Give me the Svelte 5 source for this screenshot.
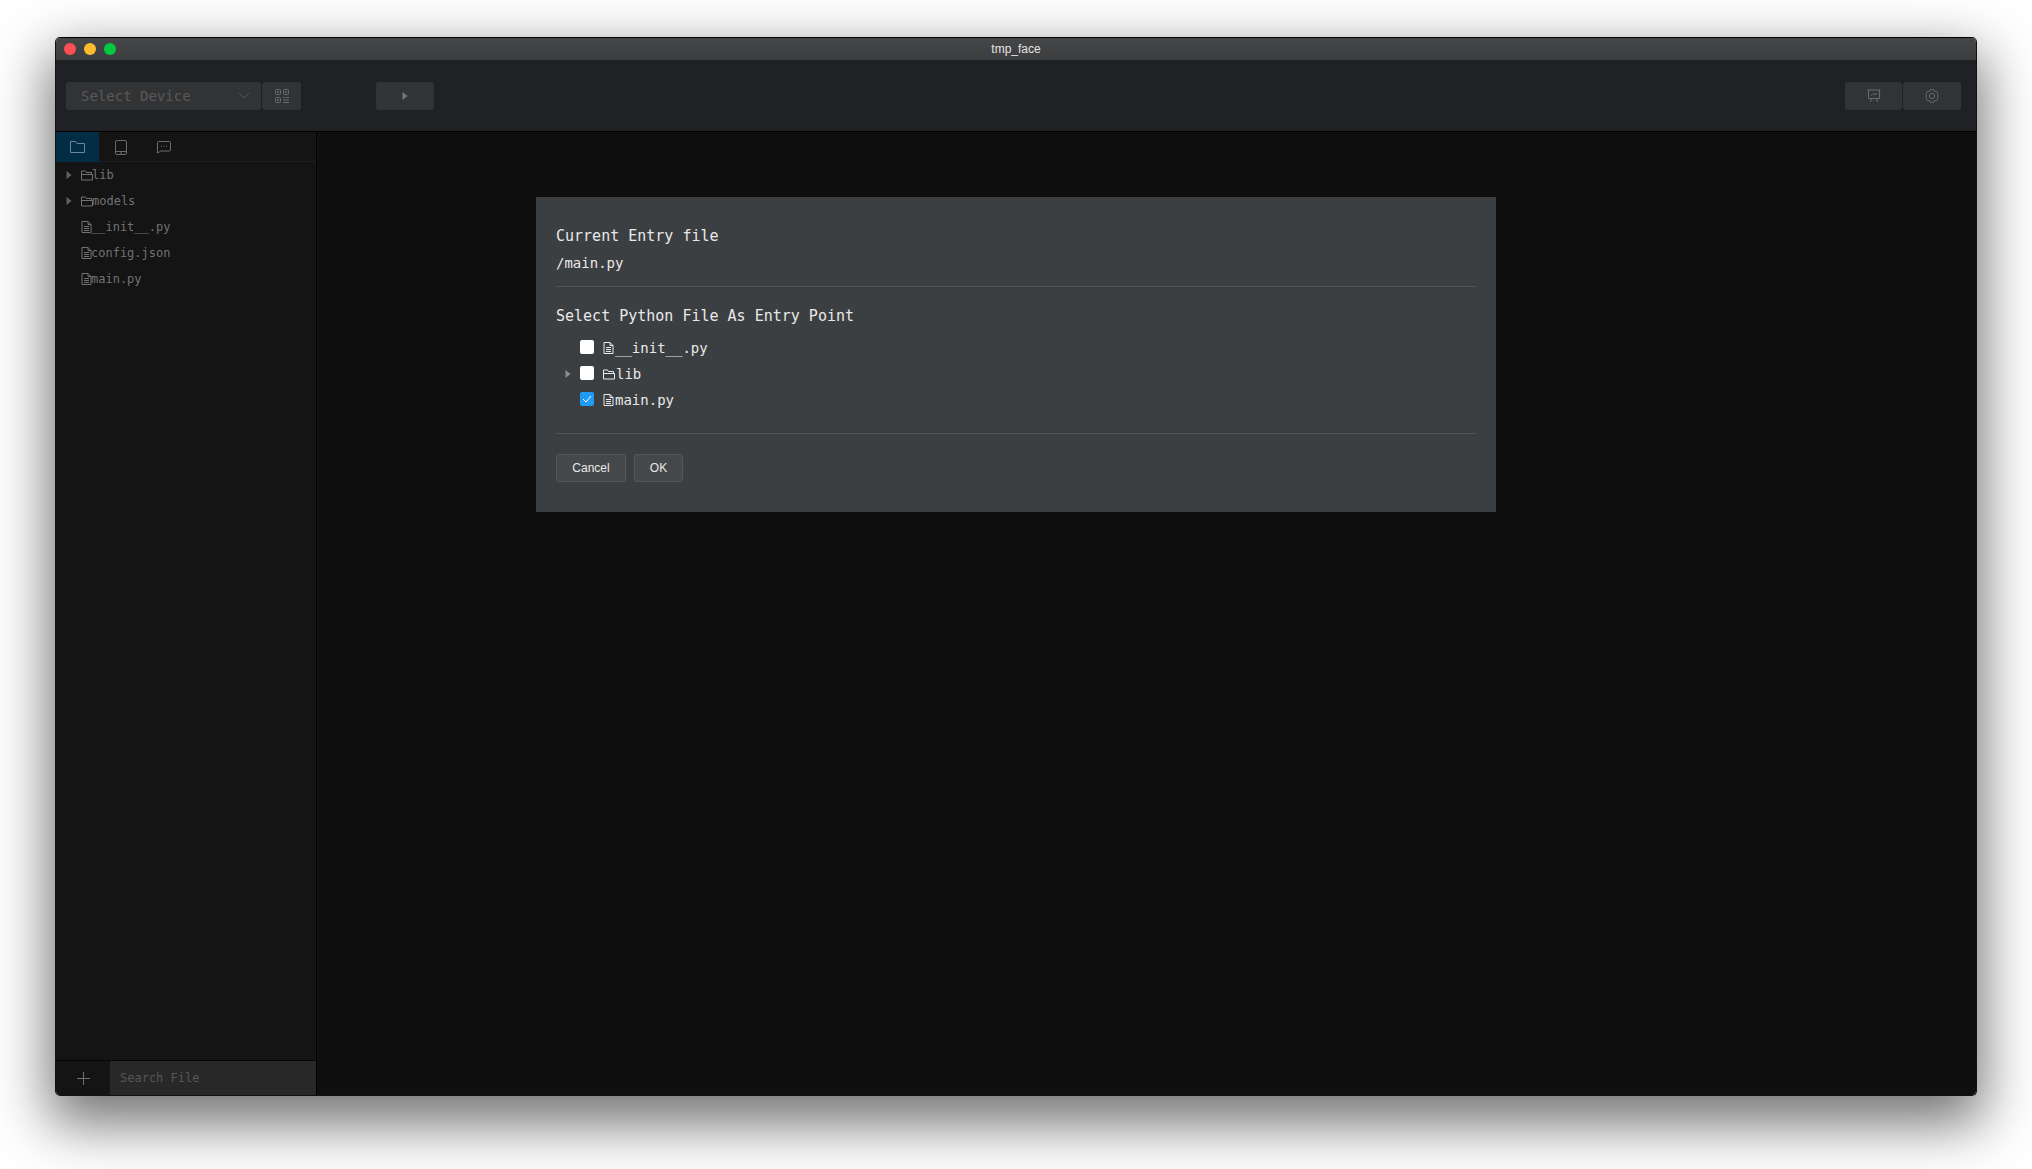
<script>
  const files = [
    { name: "lib", dir: true },
    { name: "models", dir: true },
    { name: "__init__.py" },
    { name: "config.json" },
    { name: "main.py" },
  ];
  const entries = [
    { name: "__init__.py" },
    { name: "lib", dir: true },
    { name: "main.py", checked: true },
  ];
</script>

{#snippet arrow()}
  <svg class="arrow" width="6" height="8" viewBox="0 0 6 8"><path d="M0.5 0 L5.5 4 L0.5 8 Z" /></svg>
{/snippet}

{#snippet fileIcon()}
  <svg class="file" width="11" height="12" viewBox="0 0 11 12" fill="none" stroke="currentColor">
    <path d="M1 .5 H7 L10 3.5 V11.5 H1 Z M7 .5 V3.5 H10 M3 5.5 H8 M3 7.5 H8 M3 9.5 H8" />
  </svg>
{/snippet}

{#snippet folderIcon()}
  <svg class="file" width="12" height="11" viewBox="0 0 12 11" fill="none" stroke="currentColor">
    <path d="M.5 10 V1 H4.5 L5.5 2.5 H10.5 V4.5 M.5 10 V4.5 H11.5 V10 Z" />
  </svg>
{/snippet}

<div class="window">
  <header class="titlebar">
    <div class="lights">
      <i class="red"></i>
      <i class="yellow"></i>
      <i class="green"></i>
    </div>
    <span class="title">tmp_face</span>
  </header>

  <div class="toolbar">
    <div class="select">
      <span>Select Device</span>
      <svg width="12" height="7" viewBox="0 0 12 7" fill="none" stroke="#58595a"><path d="M1 .8 L6 6 L11 .8" /></svg>
    </div>
    <button class="qr" aria-label="QR code">
      <svg width="14" height="14" viewBox="0 0 14 14" fill="none" stroke="#6b6c6d">
        <rect x=".5" y=".5" width="5" height="5" rx="1" />
        <rect x="8.5" y=".5" width="5" height="5" rx="1" />
        <rect x=".5" y="8.5" width="5" height="5" rx="1" />
        <path d="M2.5 2.5 h1 v1 h-1 z M10.5 2.5 h1 v1 h-1 z M2.5 10.5 h1 v1 h-1 z M8 8.5 h2 M11 8.5 h3 M8 11 h6 M8 13.5 h6" />
      </svg>
    </button>
    <button class="run" aria-label="Run">
      <svg width="6" height="8" viewBox="0 0 6 8"><path d="M0.5 0 L5.5 4 L0.5 8 Z" fill="#77787a" /></svg>
    </button>
    <div class="spacer"></div>
    <button class="tool" aria-label="Preview">
      <svg width="14" height="14" viewBox="0 0 14 14" fill="none" stroke="#6b6c6d">
        <path d="M.5 1 H13.5 M1.5 1 V9.5 H12.5 V1 M4.5 9.5 L3.5 13 M9.5 9.5 L10.5 13 M4 6.5 L6 4.5 L8 6 L10 4" />
      </svg>
    </button>
    <button class="tool" aria-label="Settings">
      <svg width="14" height="14" viewBox="0 0 14 14" fill="none" stroke="#6b6c6d">
        <path d="M5.2 .8 H8.8 L9.6 2.4 L11.4 2.3 L13.2 5.3 L12.2 7 L13.2 8.7 L11.4 11.7 L9.6 11.6 L8.8 13.2 H5.2 L4.4 11.6 L2.6 11.7 L.8 8.7 L1.8 7 L.8 5.3 L2.6 2.3 L4.4 2.4 Z" />
        <circle cx="7" cy="7" r="2.7" />
      </svg>
    </button>
  </div>

  <div class="body">
    <aside class="sidebar">
      <nav class="tabs">
        <button class="tab active" aria-label="Files">
          <svg width="15" height="12" viewBox="0 0 15 12" fill="none" stroke="#6f8494"><path d="M.5 11.5 V.5 H5.5 L7 2.5 H14.5 V11.5 Z" /></svg>
        </button>
        <button class="tab" aria-label="Device">
          <svg width="12" height="15" viewBox="0 0 12 15" fill="none" stroke="#696a6b"><rect x=".5" y=".5" width="11" height="14" rx="1.5" /><path d="M.5 11.5 H11.5 M5 13 H7" /></svg>
        </button>
        <button class="tab" aria-label="Messages">
          <svg width="14" height="13" viewBox="0 0 14 13" fill="none" stroke="#696a6b"><path d="M1.5 .5 H12.5 Q13.5 .5 13.5 1.5 V9 Q13.5 10 12.5 10 H4 L.5 12 V1.5 Q.5 .5 1.5 .5 Z M4 5.2 h1 M6.5 5.2 h1 M9 5.2 h1" /></svg>
        </button>
      </nav>
      <ul class="tree">
        {#each files as file}
          <li>
            <span class="caret">{#if file.dir}{@render arrow()}{/if}</span>
            <span class="icon">{#if file.dir}{@render folderIcon()}{:else}{@render fileIcon()}{/if}</span>
            <span>{file.name}</span>
          </li>
        {/each}
      </ul>
      <div class="search">
        <button class="add" aria-label="Add">
          <svg width="13" height="13" viewBox="0 0 13 13" stroke="#6f7071"><path d="M6.5 0 V13 M0 6.5 H13" /></svg>
        </button>
        <div class="field">Search File</div>
      </div>
    </aside>
    <main class="content"></main>
  </div>

  <div class="overlay">
    <div class="dialog">
      <h3>Current Entry file</h3>
      <p>/main.py</p>
      <hr />
      <h3 class="second">Select Python File As Entry Point</h3>
      <ul class="entries">
        {#each entries as entry}
          <li>
            <span class="caret">{#if entry.dir}{@render arrow()}{/if}</span>
            <span class="check" class:on={entry.checked}>
              {#if entry.checked}
                <svg width="10" height="8" viewBox="0 0 10 8" fill="none" stroke="#fff"><path d="M1 4 L4 7 L9 1" /></svg>
              {/if}
            </span>
            <span class="icon">{#if entry.dir}{@render folderIcon()}{:else}{@render fileIcon()}{/if}</span>
            <span>{entry.name}</span>
          </li>
        {/each}
      </ul>
      <hr class="lower" />
      <div class="actions">
        <button class="cancel">Cancel</button>
        <button class="ok">OK</button>
      </div>
    </div>
  </div>
</div>

<style>
  :global(body) {
    background: #fff;
    height: 1169px;
    overflow: hidden;
  }

  .window {
    position: relative;
    display: flex;
    flex-direction: column;
    box-sizing: border-box;
    width: 1922px;
    height: 1059px;
    margin: 37px 0 0 55px;
    border: 1px solid #111;
    border-top-color: #000;
    border-radius: 5px;
    overflow: hidden;
    box-shadow: 0 22px 55px 6px rgba(0, 0, 0, 0.55), inset 0 0 0 1px rgba(255, 255, 255, 0.1);
    font-family: "DejaVu Sans Mono", "Liberation Mono", monospace;
  }

  .titlebar {
    position: relative;
    display: flex;
    flex: none;
    align-items: center;
    justify-content: center;
    height: 22px;
    background: linear-gradient(#454648, #3c3d3f);
  }

  .lights {
    position: absolute;
    left: 8px;
    top: 5px;
    display: flex;
    gap: 8px;
  }

  .lights i {
    width: 12px;
    height: 12px;
    border-radius: 50%;
  }

  .red { background: #fc4e55; }
  .yellow { background: #febb2e; }
  .green { background: #04c83f; }

  .title {
    font: 12px "Liberation Sans", Arial, sans-serif;
    color: #e4e4e4;
  }

  .toolbar {
    display: flex;
    flex: none;
    align-items: center;
    box-sizing: border-box;
    height: 72px;
    padding: 0 15px 0 10px;
    background: #202124;
    border-bottom: 1px solid #000;
  }

  button {
    display: flex;
    align-items: center;
    justify-content: center;
    padding: 0;
    border: 0;
    background: none;
  }

  .select {
    display: flex;
    align-items: center;
    justify-content: space-between;
    box-sizing: border-box;
    width: 195px;
    height: 28px;
    padding: 0 11px 0 15px;
    background: #323334;
    border-radius: 3px;
    font-size: 14px;
    color: #59595a;
  }

  .qr,
  .run,
  .tool {
    height: 28px;
    background: #323334;
    border-radius: 3px;
  }

  .qr {
    width: 39px;
    margin-left: 1px;
  }

  .run {
    width: 58px;
    margin-left: 75px;
  }

  .spacer {
    flex: 1;
  }

  .tool {
    width: 57px;
  }

  .tool + .tool {
    width: 58px;
    margin-left: 1px;
  }

  .body {
    display: flex;
    flex: 1;
    min-height: 0;
  }

  .sidebar {
    display: flex;
    flex: none;
    flex-direction: column;
    box-sizing: border-box;
    width: 261px;
    background: #141414;
    border-right: 1px solid #000;
  }

  .tabs {
    display: flex;
    flex: none;
    box-sizing: border-box;
    height: 30px;
    border-bottom: 1px solid #1e1f20;
  }

  .tab {
    width: 43px;
    height: 30px;
  }

  .tab.active {
    background: #022d45;
  }

  .tree,
  .entries {
    margin: 0;
    padding: 0;
    list-style: none;
  }

  .tree {
    flex: 1;
    font-size: 12px;
    color: #717273;
  }

  .tree li {
    display: flex;
    align-items: center;
    height: 26px;
    padding-left: 10px;
  }

  .caret {
    display: flex;
    flex: none;
    width: 15px;
  }

  .arrow {
    fill: #5f6061;
  }

  .entries .arrow {
    fill: #8a8c8e;
  }

  .icon {
    display: flex;
    flex: none;
  }

  .tree .icon {
    margin-right: -1px;
  }

  .entries .icon {
    margin-right: 1px;
  }

  .search {
    display: flex;
    flex: none;
    box-sizing: border-box;
    height: 35px;
    border-top: 1px solid #050505;
  }

  .add {
    width: 54px;
  }

  .field {
    flex: 1;
    padding-left: 10px;
    background: #282828;
    font-size: 12px;
    line-height: 34px;
    color: #565656;
  }

  .content {
    flex: 1;
    background: #0f0f0f;
  }

  .overlay {
    position: absolute;
    top: 159px;
    left: 0;
    right: 0;
    display: flex;
    justify-content: center;
  }

  .dialog {
    box-sizing: border-box;
    width: 960px;
    height: 315px;
    padding: 30px 20px 0;
    background: #3c3f41;
    color: #e9e9e9;
  }

  h3 {
    margin: 0;
    font-size: 15px;
    font-weight: 400;
    line-height: 18px;
  }

  p {
    margin: 9px 0 0;
    font-size: 14px;
    line-height: 18px;
  }

  hr {
    height: 1px;
    margin: 14px 0 0;
    border: 0;
    background: #515354;
  }

  .second {
    margin-top: 20px;
  }

  .entries {
    margin-top: 10px;
    font-size: 14px;
  }

  .entries li {
    display: flex;
    align-items: center;
    height: 26px;
    padding-left: 9px;
  }

  .check {
    display: flex;
    flex: none;
    align-items: center;
    justify-content: center;
    width: 14px;
    height: 14px;
    margin: 0 9px 2px 0;
    background: #fff;
    border-radius: 2px;
  }

  .check.on {
    background: #1f9bf6;
  }

  .lower {
    margin-top: 20px;
  }

  .actions {
    display: flex;
    gap: 8px;
    margin-top: 20px;
  }

  .actions button {
    box-sizing: border-box;
    height: 28px;
    background: #45484a;
    border: 1px solid #54575a;
    border-radius: 3px;
    font: 12px "Liberation Sans", Arial, sans-serif;
    color: #e9e9e9;
  }

  .cancel {
    width: 70px;
  }

  .ok {
    width: 49px;
  }
</style>
